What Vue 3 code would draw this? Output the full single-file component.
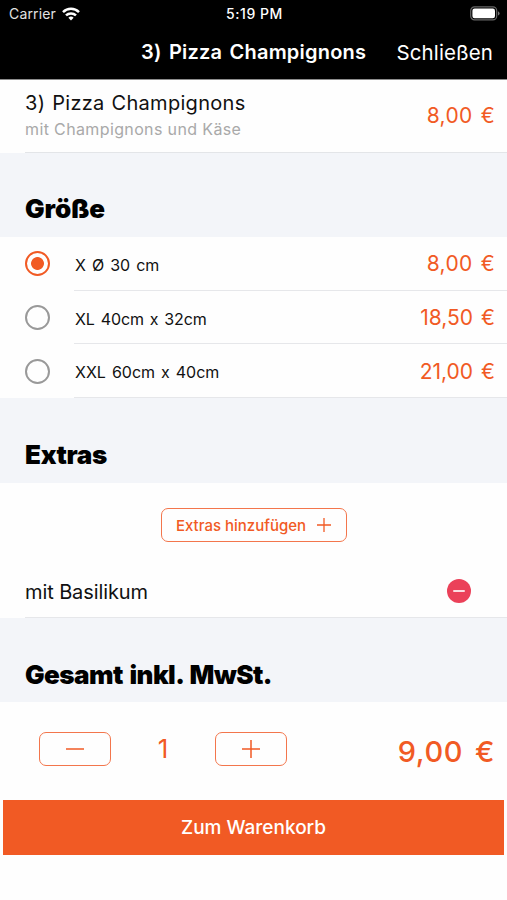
<script setup>
import { ref } from 'vue'

const sizes = [
  { id: 'x', label: 'X Ø 30 cm', price: '8,00 €' },
  { id: 'xl', label: 'XL 40cm x 32cm', price: '18,50 €' },
  { id: 'xxl', label: 'XXL 60cm x 40cm', price: '21,00 €' },
]
const selected = ref('x')
const quantity = ref(1)
</script>

<template>
  <main class="screen">
    <header class="top">
      <div class="status">
        <div class="carrier">
          <span>Carrier</span>
          <svg class="wifi" viewBox="0 0 18 14" width="18" height="14" fill="none" stroke="#fff" stroke-width="2.5">
            <path d="M1 5.1a11.5 11.5 0 0 1 16 0" />
            <path d="M4 8.4a7.2 7.2 0 0 1 10 0" />
            <path d="M6.4 10.7a3.7 3.7 0 0 1 5.2 0L9 13.4z" fill="#fff" stroke="none" />
          </svg>
        </div>
        <span class="clock">5:19 PM</span>
        <svg class="battery" viewBox="0 0 30 15" width="30" height="15">
          <rect x="0.7" y="0.9" width="26" height="13" rx="3.8" fill="none" stroke="#666" stroke-width="1.2" />
          <rect x="2.4" y="2.6" width="22.6" height="9.6" rx="2.2" fill="#fff" />
          <path d="M28 5.2q1.6 .7 1.6 2.2t-1.6 2.2z" fill="#777" />
        </svg>
      </div>
      <nav class="nav">
        <h1 class="nav-title">3) Pizza Champignons</h1>
        <a class="close">Schließen</a>
      </nav>
    </header>

    <section class="product">
      <div>
        <div class="name">3) Pizza Champignons</div>
        <div class="desc">mit Champignons und Käse</div>
      </div>
      <span class="price price-x">8,00 €</span>
    </section>

    <h2 class="heading"><span class="h-size">Größe</span></h2>
    <section class="sizes">
      <div v-for="s in sizes" :key="s.id" class="size" @click="selected = s.id">
        <span class="radio" :class="{ on: selected === s.id }"></span>
        <div class="size-body">
          <span class="size-label" :class="'label-' + s.id">{{ s.label }}</span>
          <span class="price" :class="'price-' + s.id">{{ s.price }}</span>
        </div>
      </div>
    </section>

    <h2 class="heading extras-heading"><span class="h-extras">Extras</span></h2>
    <section class="extras">
      <button class="outline add">
        <span>Extras hinzufügen</span>
        <svg viewBox="0 0 14 14" width="14" height="14" stroke="#f15a24" stroke-width="1.3"><path d="M7 0v14M0 7h14" /></svg>
      </button>
      <div class="extra">
        <span class="extra-name">mit Basilikum</span>
        <svg class="remove" viewBox="0 0 24 24" width="24" height="24">
          <circle cx="12" cy="12" r="12" fill="#eb4159" />
          <path d="M7 12h10" stroke="#fbdde1" stroke-width="2" stroke-linecap="round" />
        </svg>
      </div>
    </section>

    <h2 class="heading total-heading"><span class="h-total">Gesamt inkl. MwSt.</span></h2>
    <section class="total">
      <button class="outline step" @click="quantity > 1 && quantity--">
        <svg viewBox="0 0 18 18" width="18" height="18" stroke="#f15a24" stroke-width="1.5"><path d="M0 9h18" /></svg>
      </button>
      <span class="qty">{{ quantity }}</span>
      <button class="outline step" @click="quantity++">
        <svg viewBox="0 0 18 18" width="18" height="18" stroke="#f15a24" stroke-width="1.5"><path d="M0 9h18M9 0v18" /></svg>
      </button>
      <span class="sum">9,00 €</span>
    </section>

    <footer class="footer">
      <button class="cart"><span>Zum Warenkorb</span></button>
    </footer>
  </main>
</template>

<style>
body {
  margin: 0;
  background: #fefefe;
}
</style>

<style scoped>
.screen {
  width: 507px;
  height: 900px;
  overflow: hidden;
  background: #fefefe;
  color: #111;
  font-family: Inter, "Noto Sans", sans-serif;
  white-space: nowrap;
}
h1, h2 { margin: 0; }
button {
  margin: 0;
  padding: 0;
  font-family: inherit;
}
svg { display: block; flex: none; }

.top {
  box-sizing: border-box;
  height: 80px;
  background: #000;
  border-bottom: 1px solid #8c8c8c;
  color: #fff;
}
.status {
  display: grid;
  grid-template-columns: 1fr auto 1fr;
  align-items: center;
  height: 27px;
  padding: 0 7px 0 9px;
  font-size: 14px;
}
.carrier {
  display: flex;
  align-items: center;
  gap: 6px;
  color: #e2e2e2;
}
.carrier span { letter-spacing: 0.15px; }
.clock {
  font-weight: 500;
  letter-spacing: 0.55px;
}
.battery { justify-self: end; }
.nav {
  display: flex;
  align-items: center;
  justify-content: space-between;
  height: 50px;
  padding: 0 14px 0 141px;
}
.nav-title {
  font-size: 20px;
  font-weight: 600;
  letter-spacing: 0.22px;
  word-spacing: 2px;
}
.close { font-size: 20.5px; letter-spacing: 0.1px; }

.product {
  display: flex;
  justify-content: space-between;
  box-sizing: border-box;
  height: 73px;
  margin-left: 25px;
  padding-right: 12px;
  border-bottom: 1px solid #e3e5e8;
}
.name {
  margin-top: 9px;
  font-size: 20px;
  line-height: 28px;
  letter-spacing: 0.3px;
  word-spacing: 1px;
}
.desc {
  font-size: 16px;
  line-height: 25px;
  letter-spacing: 0.37px;
  color: #a9a9a9;
}
.price {
  align-self: center;
  padding-top: 2px;
  color: #f15a24;
  font-size: 21px;
  line-height: 28px;
  word-spacing: 2px;
}
.price-x { letter-spacing: 0.3px; }
.product .price { margin-top: -2px; }

.heading {
  display: flex;
  align-items: center;
  box-sizing: border-box;
  height: 84px;
  padding: 27px 0 0 25px;
  background: #f3f5f9;
  color: #000;
  font-size: 26px;
  font-weight: 900;
  line-height: 30px;
}
.h-size { letter-spacing: 0; }
.h-extras { letter-spacing: -0.3px; }
.h-total { letter-spacing: -0.55px; word-spacing: 2px; }
.size {
  display: flex;
  align-items: center;
  height: 53.7px;
}
.size-body {
  display: flex;
  flex: 1;
  align-items: center;
  justify-content: space-between;
  box-sizing: border-box;
  height: 100%;
  padding-right: 12px;
  border-bottom: 1px solid #e6e7ea;
}
.size-label {
  padding: 3px 0 0 1px;
  font-size: 16px;
  word-spacing: 1.5px;
}
.label-xl { letter-spacing: -0.1px; }
.radio {
  box-sizing: border-box;
  width: 25px;
  height: 25px;
  margin: 0 24px 0 25px;
  border: 2px solid #999;
  border-radius: 50%;
}
.radio.on {
  border-color: #f15a24;
  background: radial-gradient(circle, #f15a24 6px, transparent 6.8px);
}
.extras-heading { height: 85px; padding-top: 29px; }
.extras {
  box-sizing: border-box;
  height: 135px;
  padding-top: 25px;
}
.outline {
  display: flex;
  align-items: center;
  justify-content: center;
  box-sizing: border-box;
  height: 34px;
  border: 1.5px solid #f3764c;
  border-radius: 7px;
  background: none;
}
.add {
  gap: 11px;
  width: 186px;
  margin: 0 auto;
  color: #f15a24;
  font-size: 15px;
  font-weight: 500;
}
.extra {
  display: flex;
  align-items: center;
  justify-content: space-between;
  box-sizing: border-box;
  height: 54px;
  margin: 22px 0 0 25px;
  padding-right: 36px;
  border-bottom: 1px solid #e6e7ea;
}
.extra-name { padding-top: 2px; font-size: 20px; letter-spacing: -0.1px; }
.total-heading { padding-top: 29px; }
.total {
  display: flex;
  align-items: center;
  height: 98px;
  padding: 0 12px 0 39px;
  color: #f15a24;
}
.step { width: 72px; margin-top: -4px; }
.qty {
  width: 104px;
  margin-top: -6px;
  text-align: center;
  font-size: 26px;
}
.sum {
  margin-left: auto;
  font-size: 29px;
  font-weight: 500;
  letter-spacing: 0.6px;
  word-spacing: 3.5px;
}
.footer { padding: 0 3px; }
.cart {
  display: block;
  width: 100%;
  height: 55px;
  border: 0;
  background: #f15a24;
  color: #fff;
  font-size: 19px;
  font-weight: 500;
}
</style>
